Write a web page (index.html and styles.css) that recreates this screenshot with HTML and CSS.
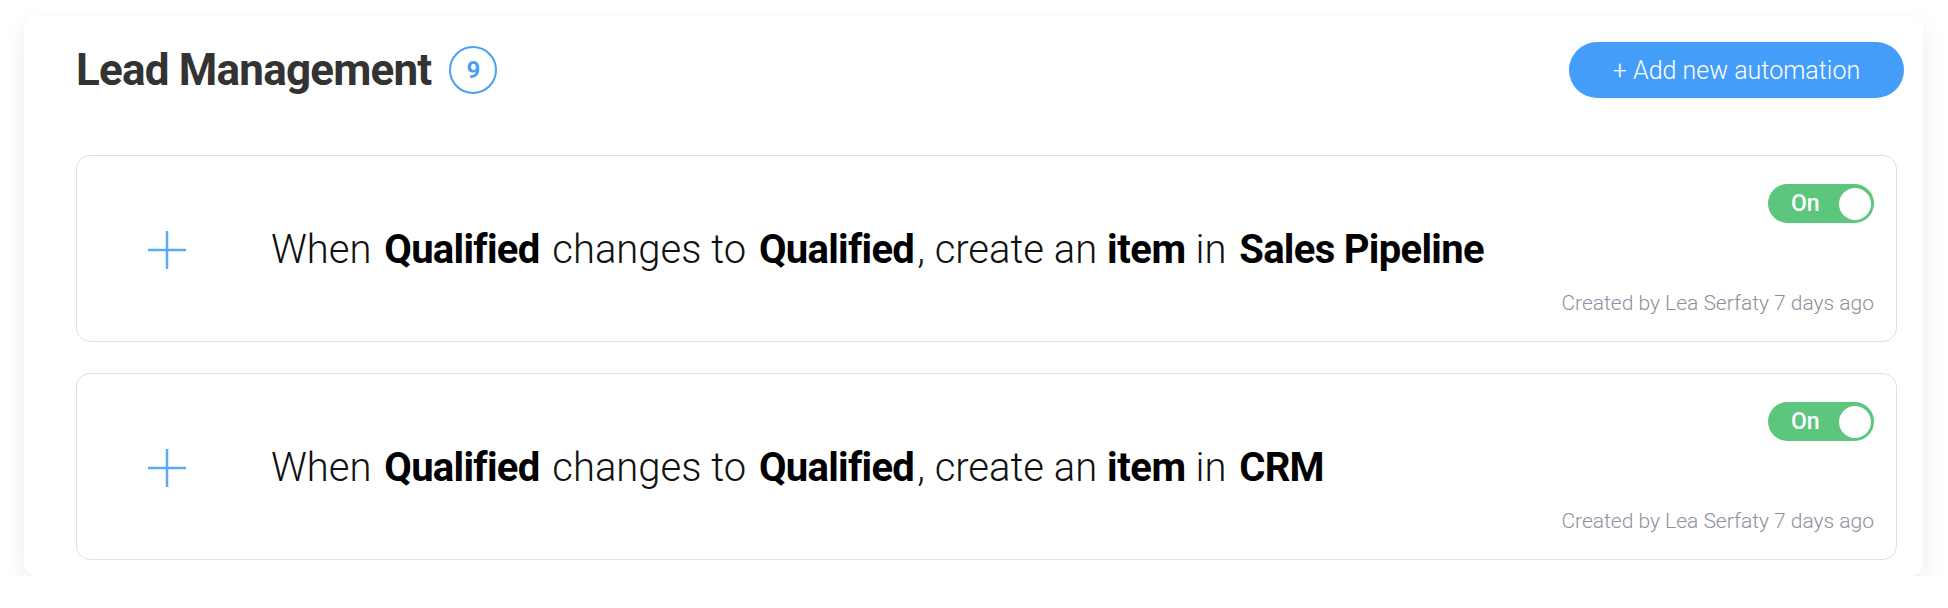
FILE: index.html
```html
<!DOCTYPE html>
<html lang="en">
  <head>
    <meta charset="UTF-8" />
    <meta name="viewport" content="width=device-width, initial-scale=1.0" />
    <title>Lead Management - Automations</title>
    <link rel="stylesheet" href="styles.css">
  </head>
  <body>
    <section class="board-automations">
      <header class="section-header">
        <div class="section-title">
          <h1>Lead Management</h1>
          <span class="count-badge">9</span>
        </div>
        <button class="add-btn">+ Add new automation</button>
      </header>

      <div class="recipe-list">
        <!-- Recipe 1 -->
        <div class="recipe-card">
          <span class="recipe-icon">
            <svg width="40" height="40" viewBox="0 0 40 40">
              <path d="M20 1v38M1 20h38" stroke="currentColor" stroke-width="2.5" fill="none" />
            </svg>
          </span>
          <p class="recipe-text">
            When <span class="field">Qualified</span> changes to <span class="field">Qualified</span>, create an <b class="term">item</b> in <span class="field">Sales Pipeline</span>
          </p>
          <div class="recipe-meta">
            <span class="toggle">On<span class="knob"></span></span>
            <span class="created">Created by Lea Serfaty 7 days ago</span>
          </div>
        </div>

        <!-- Recipe 2 -->
        <div class="recipe-card">
          <span class="recipe-icon">
            <svg width="40" height="40" viewBox="0 0 40 40">
              <path d="M20 1v38M1 20h38" stroke="currentColor" stroke-width="2.5" fill="none" />
            </svg>
          </span>
          <p class="recipe-text">
            When <span class="field">Qualified</span> changes to <span class="field">Qualified</span>, create an <b class="term">item</b> in <span class="field">CRM</span>
          </p>
          <div class="recipe-meta">
            <span class="toggle">On<span class="knob"></span></span>
            <span class="created">Created by Lea Serfaty 7 days ago</span>
          </div>
        </div>
      </div>
    </section>
  </body>
</html>
```

FILE: styles.css
```css
body {
  font-family: Roboto, "Liberation Sans", sans-serif;
  background-color: #fff;
  color: #333;
  margin: 0;
  padding: 16px 25px 0 24px;
}

/* tarjeta principal */
.board-automations {
  background-color: #fff;
  border-radius: 14px;
  box-shadow: 0 8px 24px rgba(0, 0, 0, 0.08);
  padding: 26px 19px 16px 52px;
}

.section-header {
  display: flex;
  align-items: center;
  justify-content: space-between;
  height: 56px;
  margin-bottom: 57px;
}

.section-title {
  display: flex;
  align-items: center;
  gap: 18px;
}

h1 {
  margin: 0;
  font-size: 44px;
  font-weight: 700;
  letter-spacing: -0.8px;
  color: #333;
}

.count-badge {
  width: 44px;
  height: 44px;
  border: 2px solid #4a9ff5;
  border-radius: 50%;
  display: flex;
  align-items: center;
  justify-content: center;
  font-size: 24px;
  font-weight: 700;
  color: #4a9ff5;
}

.add-btn {
  font-family: Roboto, "Liberation Sans", sans-serif;
  background-color: #449df8;
  color: #fff;
  border: none;
  border-radius: 28px;
  width: 335px;
  height: 56px;
  font-size: 25px;
  font-weight: 300;
  cursor: pointer;
}

.recipe-list {
  display: flex;
  flex-direction: column;
  gap: 31px;
  margin-right: 7px;
}

.recipe-card {
  display: flex;
  align-items: center;
  border: 1px solid #dedfe7;
  border-radius: 14px;
  padding: 28px 22px 26px 70px;
}

.recipe-icon {
  display: flex;
  color: #58acf6;
  margin-right: 84px;
}

.recipe-text {
  flex: 1;
  margin: 0;
  font-size: 40px;
  font-weight: 300;
  color: #111;
}

.field {
  font-weight: 700;
  color: #000;
  letter-spacing: -0.7px;
  padding: 0 3px;
}

.term {
  font-weight: 700;
  color: #000;
  letter-spacing: -0.4px;
}

.recipe-meta {
  align-self: stretch;
  display: flex;
  flex-direction: column;
  align-items: flex-end;
  gap: 68px;
}

.toggle {
  display: flex;
  align-items: center;
  justify-content: space-between;
  box-sizing: border-box;
  width: 106px;
  height: 39px;
  border-radius: 20px;
  background-color: #5cc67c;
  color: #fff;
  font-size: 23px;
  font-weight: 500;
  padding: 0 3px 0 23px;
}

.knob {
  width: 32px;
  height: 32px;
  border-radius: 50%;
  background-color: #fff;
}

.created {
  font-size: 21px;
  line-height: 24px;
  font-weight: 300;
  color: #8e8fa0;
}
```
